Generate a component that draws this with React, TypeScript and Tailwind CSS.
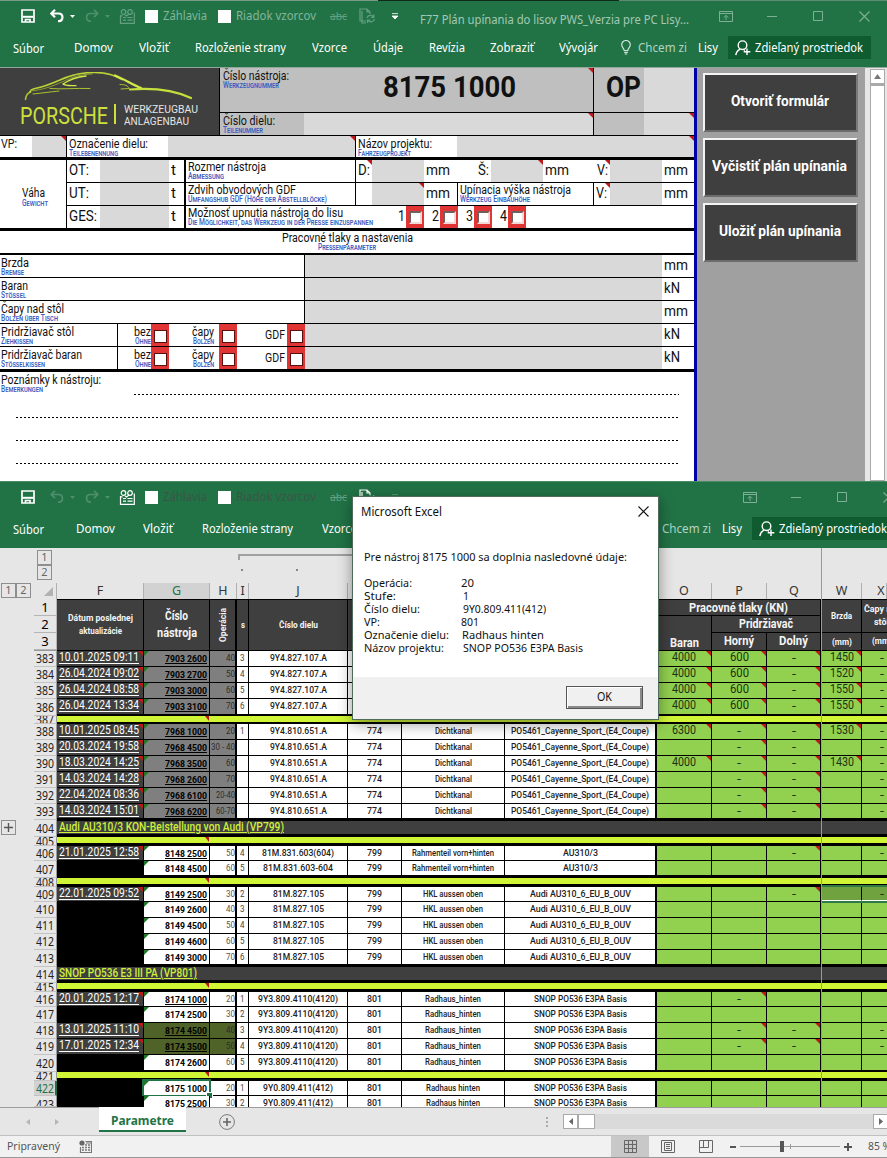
import React, { useLayoutEffect, useRef, useState } from "react";

/* Text condensed or widened horizontally so that it spans w pixels. */
function Fit({ w, className = "", vertical = false, children }: { w: number; className?: string; vertical?: boolean; children: React.ReactNode }) {
  const ref = useRef<HTMLSpanElement>(null);
  const [scale, setScale] = useState(1);
  useLayoutEffect(() => {
    const el = ref.current;
    if (!el) return;
    const prev = el.style.transform;
    el.style.transform = "none";
    const box = el.getBoundingClientRect();
    el.style.transform = prev;
    const natural = vertical ? box.height : box.width;
    if (natural) setScale(w / natural);
  }, [w, vertical, children]);
  return (
    <span className="flex shrink-0 items-start justify-start whitespace-nowrap" style={{ width: w }}>
      <span ref={ref} className={"block shrink-0 origin-left " + className} style={{ transform: `scaleX(${scale})` }}>
        {children}
      </span>
    </span>
  );
}

/* ---------- icons ---------- */
const SaveIcon = () => (
  <svg width="14" height="14" viewBox="0 0 14 14" fill="none" stroke="#fff" strokeWidth="1.7">
    <path d="M1 1h12v12H1z" />
    <path d="M1.500 7.800h11" strokeWidth="2" />
    <path d="M4.500 13v-2.500h4.500V13" />
  </svg>
);
const UndoIcon = ({ flip = false, dim = false }: { flip?: boolean; dim?: boolean }) => (
  <svg width="14" height="14" viewBox="0 0 14 14" fill="none" stroke={dim ? "#4f8f6c" : "#fff"} strokeWidth={dim ? 1.7 : 2.2} className={flip ? "-scale-x-100" : ""}>
    <path d="M1.500 4.500h7.200c5 0 5 7.500 0 7.700H8" />
    <path d="M5 .8L1.300 4.500 5 8.200" />
  </svg>
);
const Caret = ({ dim = false }: { dim?: boolean }) => (
  <svg width="5" height="3" viewBox="0 0 5 3"><path d="M0 0h5L2.500 3z" fill={dim ? "#4f8f6c" : "#fff"} /></svg>
);
const FormIcon = ({ color }: { color: string }) => (
  <svg width="17" height="15" viewBox="0 0 17 15" fill="none" stroke={color} strokeWidth="1.200">
    <circle cx="4.500" cy="3" r="2.300" /><circle cx="11" cy="3" r="2.300" />
    <path d="M1.500 6v8.300h13.800V3.500M1.500 6.800h2" />
    <path d="M4 8.500h3M8.500 8.500h5M4 11.200h3M8.500 11.200h5M6 6l1.500 1L10 5" />
  </svg>
);
const PageRefreshIcon = ({ color }: { color: string }) => (
  <svg width="17" height="16" viewBox="0 0 17 16" fill="none" stroke={color} strokeWidth="1.200">
    <path d="M7 13H1V1h7l3 3v2M8 1v3h3M3 3v12h4" />
    <path d="M8 10c.5-3 5-3.800 6.500-1M14.800 6.500V9.300H12M15.500 11c-.5 3.200-5 4-6.500 1M8.500 15v-3h2.800" />
  </svg>
);
const RibbonIcon = () => (
  <svg width="14" height="11" viewBox="0 0 14 11" fill="none" stroke="#7fb095" strokeWidth="1">
    <path d="M.5.5h13v10H.5zM.5 2.500h13M7 9V4.500M4.800 6.500L7 4.300l2.200 2.200" />
  </svg>
);
const MaxIcon = () => (
  <svg width="10" height="10" viewBox="0 0 10 10"><path d="M.5.5h9v9h-9z" fill="none" stroke="#7fb095" /></svg>
);
const CloseIcon = ({ color }: { color: string }) => (
  <svg width="11" height="11" viewBox="0 0 11 11"><path d="M.5.5l10 10M10.500.5l-10 10" fill="none" stroke={color} strokeWidth="1.100" /></svg>
);
const PersonIcon = () => (
  <svg width="16" height="16" viewBox="0 0 16 16" fill="none" stroke="#fff" strokeWidth="1.400">
    <circle cx="7.500" cy="5.200" r="4.300" />
    <path d="M.8 15.200c.4-3.200 2.200-5 4.500-6M8.500 9.500l1.500.8M12 8.500v6.500M8.700 11.800h6.600" />
  </svg>
);
const BulbIcon = () => (
  <svg width="10" height="15" viewBox="0 0 10 15" fill="none" stroke="#cfe3d8" strokeWidth="1.200">
    <path d="M3.200 10.500c0-2-2.500-3-2.500-5.700a4.300 4.300 0 0 1 8.600 0c0 2.700-2.500 3.700-2.500 5.700zM3.200 12.300h3.600M3.700 14h2.600" />
  </svg>
);

/* ---------- ribbon ---------- */
function QuickBar({ active }: { active: boolean }) {
  const label = active ? "text-[#83b59a]" : "text-[#3a5546]";
  return (
    <div className={"grid h-[30px] grid-rows-1 items-center " + (active ? "grid-cols-[21px_29px_20px_15px_20px_14px_26px_18px_55px_18px_94px_29px_33px_28px_299px_48px_46px_46px_28px]" : "grid-cols-[21px_29px_20px_15px_20px_14px_26px_18px_55px_18px_94px_29px_33px_28px_323px_48px_46px_46px_12px]")}>
      <i />
      <SaveIcon />
      <UndoIcon dim={!active} />
      <Caret dim={!active} />
      <UndoIcon flip dim />
      <Caret dim />
      <FormIcon color={active ? "#64a080" : "#fff"} />
      <b className="size-[13px] bg-white" />
      <Fit w={44} className={"text-[12px] leading-4 " + label}>Záhlavia</Fit>
      <b className="size-[13px] bg-white" />
      <Fit w={80} className={"text-[12px] leading-4 " + label}>Riadok vzorcov</Fit>
      <Fit w={17} className="text-[10px] leading-4 text-[#64a080] line-through">abc</Fit>
      <PageRefreshIcon color={active ? "#64a080" : "#fff"} />
      <svg width="6" height="7" viewBox="0 0 6 7"><path d="M0 .6h6M0 3l3 3 3-3z" fill={active ? "#fff" : "#64a080"} stroke={active ? "#fff" : "#64a080"} strokeWidth=".8" /></svg>
      <div className="pt-[7px]">{active && <Fit w={269} className="text-[12px] leading-4 text-[#a3c8b3]">F77 Plán upínania do lisov PWS_Verzia pre PC Lisy...</Fit>}</div>
      <RibbonIcon />
      <b className="h-px w-[10px] bg-[#7fb095]" />
      <MaxIcon />
      <CloseIcon color="#7fb095" />
    </div>
  );
}

function ShareButton() {
  return (
    <div className="flex h-[23px] w-[143px] items-center gap-1 bg-[#0e5c2f] pl-[7px]">
      <PersonIcon />
      <Fit w={108} className="text-[12.500px] leading-5">Zdieľaný prostriedok</Fit>
    </div>
  );
}

function Ribbon({ active }: { active: boolean }) {
  const t = "text-[12.500px] leading-5";
  return (
    <header className="h-[67px] shrink-0 overflow-hidden bg-[#217346] text-white">
      {active ? (
        <div className="flex h-px">
          <b className="w-[378px] bg-[#7a9a86]" /><b className="w-[241px] bg-[#0d2a1b]" /><b className="flex-1 bg-[#5d8a70]" />
        </div>
      ) : (
        <div className="h-px bg-[#4b8c68]" />
      )}
      <QuickBar active={active} />
      {active ? (
        <div className="grid h-[33px] grid-cols-[13px_61px_65px_56px_117px_61px_56px_61px_69px_62px_17px_60px_30px_159px] grid-rows-1 items-center">
          <i />
          <Fit w={31} className={t + " mt-[2px]"}>Súbor</Fit>
          <Fit w={39} className={t}>Domov</Fit>
          <Fit w={30} className={t}>Vložiť</Fit>
          <Fit w={91} className={t}>Rozloženie strany</Fit>
          <Fit w={35} className={t}>Vzorce</Fit>
          <Fit w={30} className={t}>Údaje</Fit>
          <Fit w={36} className={t}>Revízia</Fit>
          <Fit w={44} className={t}>Zobraziť</Fit>
          <Fit w={39} className={t}>Vývojár</Fit>
          <BulbIcon />
          <Fit w={49} className={t + " text-[#b5d3c2]"}>Chcem zi</Fit>
          <Fit w={20} className={t}>Lisy</Fit>
          <ShareButton />
        </div>
      ) : (
        <div className="grid h-[33px] grid-cols-[13px_63px_67px_59px_120px_340px_60px_30px_135px] grid-rows-1 items-center">
          <i />
          <Fit w={31} className={t + " mt-[2px]"}>Súbor</Fit>
          <Fit w={39} className={t}>Domov</Fit>
          <Fit w={30} className={t}>Vložiť</Fit>
          <Fit w={91} className={t}>Rozloženie strany</Fit>
          <Fit w={35} className={t}>Vzorce</Fit>
          <Fit w={49} className={t + " text-[#b5d3c2]"}>Chcem zi</Fit>
          <Fit w={20} className={t}>Lisy</Fit>
          <ShareButton />
        </div>
      )}
    </header>
  );
}

/* ---------- form sheet ---------- */
const RedMark = () => (
  <svg className="absolute right-0 top-0" width="5" height="5" viewBox="0 0 5 5"><path d="M0 0h5v5z" fill="#c01818" /></svg>
);

const blue = "text-[8.500px] font-medium leading-[7px] text-[#3a5cc0] [font-variant:small-caps]";

function Label({ sk, w, de, dw, className = "", end = false }: { sk: string; w: number; de?: string; dw?: number; className?: string; end?: boolean }) {
  return (
    <div className={"flex flex-col pl-[1px] " + (end ? "items-end " : "") + className}>
      <Fit w={w} className="text-[12.500px] leading-[14px]">{sk}</Fit>
      {de && <Fit w={dw || 10} className={"-mt-px " + blue}>{de}</Fit>}
    </div>
  );
}

function Unit({ children, w }: { children: string; w: number }) {
  return <div className="pl-[2px]"><Fit w={w} className="text-[15.500px] leading-[21px]">{children}</Fit></div>;
}

const Gray = ({ className = "", mark = false }: { className?: string; mark?: boolean }) => (
  <div className={"relative h-full bg-[#d9d9d9] " + className}>{mark && <RedMark />}</div>
);

const TickBox = () => (
  <div className="flex h-full w-[18px] items-center justify-center bg-[#e13434] pt-[3px]">
    <div className="size-[13px] border border-[#5a0f0f] bg-white" />
  </div>
);
const SunkenBox = () => (
  <div className="flex h-full w-[18px] items-center justify-center bg-[#e13434]">
    <div className="size-[13px] border-2 border-b-[#f3d8d8] border-l-[#6f5f5f] border-r-[#f3d8d8] border-t-[#6f5f5f] bg-white" />
  </div>
);

function Logo() {
  return (
    <div className="h-[67px] w-[219px] shrink-0 bg-[#3f3f3f] pl-5 pt-1">
      <svg width="180" height="32" viewBox="20 72 180 32" fill="none" strokeLinecap="round" className="-mb-px block">
        <path d="M25.500 99.500c.3-4 1.500-6 5-7.500" stroke="#a9c22e" strokeWidth="1.600" />
        <path d="M30 92c.5-2 1.500-2.700 5-3.500 10-2 17-5 25-8.500 13-6 22-7.500 34-7.500 14 0 20 3 28 7" stroke="#bcd536" strokeWidth="1.700" />
        <path d="M31 91c12-1.500 20-4 32-9.500 9-4.500 17-7 29-7.500" stroke="#8aa02c" strokeWidth="1" />
        <path d="M115 75.500c10 4 17 9 26 12.500" stroke="#d2e84a" strokeWidth="2.400" />
        <path d="M130 89.500c25-2 45 1 61 8.500" stroke="#c6df3c" strokeWidth="2.200" />
        <path d="M86 76c-9 1-18 4.500-23 8 2 2 7 1.500 13 1.700" stroke="#d2e84a" strokeWidth="1.300" />
        <path d="M50 88.500c12 1 25-.5 40 0M120 84.500c5 0 8 1 9 4l-8 .5M33 94l26-3" stroke="#a9c22e" strokeWidth="1" />
      </svg>
      <div className="flex items-start">
        <Fit w={88} className="text-[23.500px] leading-[26px] text-[#cde03c]">PORSCHE</Fit>
        <b className="ml-[6px] mr-[8px] mt-px h-5 w-[1.500px] bg-[#cde03c]" />
        <div>
          <Fit w={74} className="text-[11.500px] leading-[12px] text-[#e4e4e4]">WERKZEUGBAU</Fit>
          <Fit w={65} className="text-[11.500px] leading-[12px] text-[#e4e4e4]">ANLAGENBAU</Fit>
        </div>
      </div>
    </div>
  );
}

const weights: [string, number][] = [["OT:", 20], ["UT:", 20], ["GES:", 28]];
const params: { sk: string; w: number; de: string; dw: number; unit: string; uw: number; boxes?: boolean }[] = [
  { sk: "Brzda", w: 28, de: "Bremse", dw: 23, unit: "mm", uw: 24 },
  { sk: "Baran", w: 27, de: "Stössel", dw: 25, unit: "kN", uw: 16 },
  { sk: "Čapy nad stôl", w: 63, de: "Bolzen über Tisch", dw: 57, unit: "mm", uw: 24 },
  { sk: "Pridržiavač stôl", w: 73, de: "Ziehkissen", dw: 32, unit: "kN", uw: 16, boxes: true },
  { sk: "Pridržiavač baran", w: 81, de: "Stösselkissen", dw: 44, unit: "kN", uw: 16, boxes: true },
];

function FormSheet() {
  return (
    <div className="flex h-[413px] w-[694px] flex-col bg-white font-[Roboto,sans-serif] text-[#111]">
      <div className="flex h-[68px] shrink-0 border-b border-black">
        <Logo />
        <div className="w-[475px] border-l border-black">
          <div className="grid h-[45px] grid-cols-[374px_50px_50px] grid-rows-1 border-b border-black">
            <div className="relative flex border-r border-black bg-[#bfbfbf]">
              <Label sk="Číslo nástroja:" w={66} de="Werkzeugnummer" dw={56} className="w-[69px] pl-[3px] pt-px" />
              <div className="ml-[94px] pt-[1px]"><Fit w={133} className="text-[29px] font-bold leading-9">8175 1000</Fit></div>
              <RedMark />
            </div>
            <div className="bg-[#bfbfbf] pl-3 pt-[1px]"><Fit w={35} className="text-[29px] font-bold leading-9">OP</Fit></div>
            <Gray />
          </div>
          <div className="grid h-[22px] grid-cols-[84px_290px_50px_50px] grid-rows-1">
            <div className="bg-[#bfbfbf]"><Label sk="Číslo dielu:" w={52} de="Teilenummer" dw={40} className="pl-[3px] pt-px" /></div>
            <Gray className="border-r border-black" mark />
            <div className="bg-[#bfbfbf]" />
            <Gray mark />
          </div>
        </div>
      </div>
      <div className="grid h-[24px] shrink-0 grid-cols-[32px_35px_101px_188px_101px_237px] grid-rows-1 border-b-[3px] border-black">
        <Label sk="VP:" w={16} className="pt-px" />
        <Gray className="border-r border-black" mark />
        <Label sk="Označenie dielu:" w={79} de="Teilebenennung" dw={49} className="pl-[2px] pt-px" />
        <Gray className="border-r border-black" mark />
        <Label sk="Názov projektu:" w={74} de="Fahrzeugprojekt" dw={53} className="pl-[2px] pt-px" />
        <Gray mark />
      </div>
      <div className="flex h-[71px] shrink-0 border-b-[3px] border-black">
        <div className="flex w-[67px] flex-col items-center border-r border-black pt-[25px]">
          <Fit w={23} className="text-[12.500px] leading-4">Váha</Fit>
          <div className="pl-1"><Fit w={26} className={"-mt-px " + blue}>Gewicht</Fit></div>
        </div>
        <div className="w-[119px] border-r-2 border-black">
          {weights.map(([t, w], i) => (
            <div key={t} className={"grid grid-cols-[33px_69px_15px] grid-rows-1 " + (i < 2 ? "h-[23px] border-b border-black" : "h-[22px]")}>
              <Unit w={w}>{t}</Unit>
              <Gray />
              <Unit w={5}>t</Unit>
            </div>
          ))}
        </div>
        <div className="w-[508px]">
          <div className="grid h-[23px] grid-cols-[170px_16px_52px_52px_15px_52px_52px_15px_52px_32px] grid-rows-1 border-b border-black">
            <Label sk="Rozmer nástroja" w={78} de="Abmessung" dw={36} className="border-r border-black pl-[2px]" />
            <div className="relative"><Unit w={12}>D:</Unit><RedMark /></div>
            <Gray />
            <Unit w={24}>mm</Unit>
            <Unit w={11}>Š:</Unit>
            <Gray mark />
            <Unit w={24}>mm</Unit>
            <div className="relative"><Unit w={11}>V:</Unit><RedMark /></div>
            <Gray />
            <Unit w={24}>mm</Unit>
          </div>
          <div className="grid h-[23px] grid-cols-[170px_16px_52px_34px_136px_16px_52px_32px] grid-rows-1 border-b border-black">
            <Label sk="Zdvih obvodových GDF" w={108} de="Umfangshub GDF (Höhe der Abstellblöcke)" dw={139} className="border-r border-black pl-[2px]" />
            <i />
            <Gray mark />
            <div className="border-r border-black"><Unit w={24}>mm</Unit></div>
            <Label sk="Upínacia výška nástroja" w={111} de="Werkzeug Einbauhöhe" dw={70} className="border-r border-black pl-[2px]" />
            <div className="relative"><Unit w={11}>V:</Unit><RedMark /></div>
            <Gray />
            <Unit w={24}>mm</Unit>
          </div>
          <div className="grid h-[22px] grid-cols-[212px_26px_8px_26px_8px_26px_8px_26px] grid-rows-1">
            <Label sk="Možnosť upnutia nástroja do lisu" w={155} de="Die Möglichkeit, das Werkzeug in der Presse einzuspannen" dw={185} className="pl-[2px]" />
            {["1", "2", "3", "4"].map((n, i) => (
              <React.Fragment key={n}>
                {i > 0 && <i />}
                <div className="flex h-full"><div className="w-2"><Fit w={7} className="text-[14px] leading-[21px]">{n}</Fit></div><SunkenBox /></div>
              </React.Fragment>
            ))}
          </div>
        </div>
      </div>
      <div className="flex h-[24px] shrink-0 flex-col items-center border-b-2 border-black">
        <Fit w={131} className="text-[12.500px] leading-[14px]">Pracovné tlaky a nastavenia</Fit>
        <Fit w={58} className={"-mt-px " + blue}>Pressenparameter</Fit>
      </div>
      {params.map((p, i) => (
        <div key={p.sk} className={"grid shrink-0 grid-cols-[305px_357px_32px] grid-rows-1 border-black " + (i === 4 ? "h-[25px] border-b-[3px]" : "h-[23px] border-b")}>
          {p.boxes ? (
            <div className="grid h-full grid-cols-[118px_33px_18px_50px_18px_50px_17px] grid-rows-1 border-r border-black">
              <Label sk={p.sk} w={p.w} de={p.de} dw={p.dw} className="border-r border-black pt-px" />
              <Label sk="bez" w={17} de="Ohne" dw={16} end className="pt-px" />
              <TickBox />
              <Label sk="čapy" w={22} de="Bolzen" dw={21} end className="pr-[5px] pt-px" />
              <TickBox />
              <div className="flex items-center justify-end pr-[2px]"><Fit w={20} className="text-[12.500px] leading-[20px]">GDF</Fit></div>
              <TickBox />
            </div>
          ) : (
            <Label sk={p.sk} w={p.w} de={p.de} dw={p.dw} className="border-r border-black pt-px" />
          )}
          <Gray />
          <Unit w={p.uw}>{p.unit}</Unit>
        </div>
      ))}
      <div className="h-[22px] shrink-0"><Label sk="Poznámky k nástroju:" w={100} de="Bemerkungen" dw={42} className="pt-px" /></div>
      <div className="ml-[134px] mr-[15px] h-px bg-[repeating-linear-gradient(90deg,#000_0_2px,#fff_2px_4px)]" />
      {[0, 1, 2].map((i) => (
        <div key={i} className="ml-4 mr-[15px] mt-[22px] h-px bg-[repeating-linear-gradient(90deg,#000_0_2px,#fff_2px_4px)]" />
      ))}
    </div>
  );
}

function SidePanel() {
  const items: [string, number][] = [["Otvoriť formulár", 98], ["Vyčistiť plán upínania", 135], ["Uložiť plán upínania", 122]];
  return (
    <div className="flex flex-1">
      <div className="w-[171px] border-l-[3px] border-[#0000a8] bg-[#a0a0a0] pl-[6px] pt-[5px] font-[Roboto,sans-serif]">
        {items.map(([t, w]) => (
          <div key={t} className="mb-[6px] flex h-[59px] w-[155px] items-center justify-center border-2 border-b-[#6c6c6c] border-l-[#f4f4f4] border-r-[#7a7a7a] border-t-[#f4f4f4] bg-[#3f3f3f] pb-1 pr-[2px]">
            <Fit w={w} className="text-[15px] font-bold leading-5 text-white">{t}</Fit>
          </div>
        ))}
      </div>
      <div className="flex flex-1 flex-col bg-[#e6e6e6] pl-[5px] pt-px">
        <div className="flex h-[15px] w-[15px] items-center justify-center border border-[#aaa] bg-white">
          <svg width="7" height="5" viewBox="0 0 7 5"><path d="M0 5h7L3.500 0z" fill="#777" /></svg>
        </div>
        <div className="w-[15px] flex-1 border border-t-2 border-[#aaa] bg-white" />
      </div>
    </div>
  );
}

/* ---------- parameter table ---------- */
type Row = {
  n: number; h: number; kind?: "gap" | "title"; title?: string; tw?: number; thick?: 2 | 3;
  date?: string; g?: string; gu?: boolean; fill?: "gray" | "olive"; op?: string; s?: string; j?: string; k?: string; l?: string; m?: string;
  o?: string; p?: string; q?: string; w?: string; x?: string; marks?: string; sel?: boolean;
};
const A = { j: "9Y4.827.107.A", fill: "gray", gu: true, p: "600", q: "-", x: "-", marks: "OPQW" } as const;
const B = { j: "9Y4.810.651.A", k: "774", l: "Dichtkanal", m: "PO5461_Cayenne_Sport_(E4_Coupe)", fill: "gray", gu: true, p: "-", q: "-", x: "-", marks: "PQ" } as const;
const C = { k: "799", l: "Rahmenteil vorn+hinten", m: "AU310/3" } as const;
const D = { j: "81M.827.105", k: "799", l: "HKL aussen oben", m: "Audi AU310_6_EU_B_OUV" } as const;
const E = { j: "9Y3.809.4110(4120)", k: "801", l: "Radhaus_hinten", m: "SNOP PO536 E3PA Basis" } as const;
const G = { j: "9Y0.809.411(412)", k: "801", l: "Radhaus hinten", m: "SNOP PO536 E3PA Basis" } as const;

const rows: Row[] = [
  { ...A, n: 383, h: 16, date: "10.01.2025 09:11", g: "7903 2600", op: "40", s: "3", o: "4000", w: "1450" },
  { ...A, n: 384, h: 16, date: "26.04.2024 09:02", g: "7903 2700", op: "50", s: "4", o: "4000", w: "1520" },
  { ...A, n: 385, h: 16, date: "26.04.2024 08:58", g: "7903 3000", op: "60", s: "5", o: "4000", w: "1550" },
  { ...A, n: 386, h: 17, thick: 2, date: "26.04.2024 13:34", g: "7903 3100", op: "70", s: "6", o: "4000", w: "1550" },
  { n: 387, h: 8, kind: "gap", thick: 2 },
  { ...B, n: 388, h: 16, date: "10.01.2025 08:45", g: "7968 1000", op: "20", s: "1", o: "6300", w: "1530", marks: "OPQW" },
  { ...B, n: 389, h: 16, date: "20.03.2024 19:58", g: "7968 4500", op: "30 - 40" },
  { ...B, n: 390, h: 16, date: "18.03.2024 14:25", g: "7968 3500", op: "60", o: "4000", w: "1430", marks: "OPQW" },
  { ...B, n: 391, h: 16, date: "14.03.2024 14:28", g: "7968 2600", op: "70" },
  { ...B, n: 392, h: 16, date: "22.04.2024 08:36", g: "7968 6100", op: "20-40" },
  { ...B, n: 393, h: 16, thick: 2, date: "14.03.2024 15:01", g: "7968 6200", op: "60-70" },
  { n: 404, h: 17, kind: "title", title: "Audi AU310/3 KON-Beistellung von Audi (VP799)", tw: 225 },
  { n: 405, h: 9, kind: "gap", thick: 3 },
  { ...C, n: 406, h: 15, date: "21.01.2025 12:58", g: "8148 2500", gu: true, op: "50", s: "4", j: "81M.831.603(604)", q: "-", x: "-", marks: "Q" },
  { ...C, n: 407, h: 17, thick: 3, g: "8148 4500", op: "60", s: "5", j: "81M.831.603-604" },
  { n: 408, h: 9, kind: "gap", thick: 3 },
  { ...D, n: 409, h: 15, date: "22.01.2025 09:52", g: "8149 2500", gu: true, op: "30", s: "2", q: "-", x: "-", marks: "Q", sel: true },
  { ...D, n: 410, h: 16, g: "8149 2600", op: "40", s: "3" },
  { ...D, n: 411, h: 16, g: "8149 4500", op: "50", s: "4" },
  { ...D, n: 412, h: 16, g: "8149 4600", op: "60", s: "5" },
  { ...D, n: 413, h: 17, thick: 3, g: "8149 3000", op: "70", s: "6" },
  { n: 414, h: 16, kind: "title", title: "SNOP PO536 E3 III PA (VP801)", tw: 138 },
  { n: 415, h: 9, kind: "gap", thick: 3 },
  { ...E, n: 416, h: 15, date: "20.01.2025 12:17", g: "8174 1000", gu: true, op: "20", s: "1", p: "-", marks: "P" },
  { ...E, n: 417, h: 16, g: "8174 2500", op: "30", s: "2" },
  { ...E, n: 418, h: 16, date: "13.01.2025 11:10", g: "8174 4500", gu: true, fill: "olive", op: "40", s: "3", p: "-", q: "-", x: "-", marks: "PQ" },
  { ...E, n: 419, h: 16, date: "17.01.2025 12:34", g: "8174 3500", gu: true, fill: "olive", op: "50", s: "4", p: "-", q: "-", x: "-", marks: "PQ" },
  { ...E, n: 420, h: 17, thick: 2, g: "8174 2600", op: "60", s: "5" },
  { n: 421, h: 9, kind: "gap", thick: 3 },
  { ...G, n: 422, h: 15, g: "8175 1000", op: "20", s: "1" },
  { ...G, n: 423, h: 11, g: "8175 2500", op: "30", s: "2" },
];

const widths: Record<string, number> = {
  "9Y4.827.107.A": 57, "9Y4.810.651.A": 57, "81M.831.603(604)": 72, "81M.831.603-604": 70, "81M.827.105": 51,
  "9Y3.809.4110(4120)": 80, "9Y0.809.411(412)": 70, "774": 15, "799": 15, "801": 15, Dichtkanal: 37,
  "Rahmenteil vorn+hinten": 82, "HKL aussen oben": 60, Radhaus_hinten: 56, "Radhaus hinten": 54,
  "PO5461_Cayenne_Sport_(E4_Coupe)": 138, "AU310/3": 35, "Audi AU310_6_EU_B_OUV": 101, "SNOP PO536 E3PA Basis": 93,
  "30 - 40": 24, "20-40": 19, "60-70": 19,
};
const heights: Record<number, string> = { 8: "h-[8px]", 9: "h-[9px]", 11: "h-[11px]", 15: "h-[15px]", 16: "h-[16px]", 17: "h-[17px]" };

function Txt({ t, className = "border-r" }: { t?: string; className?: string }) {
  return (
    <div className={"flex justify-center border-black bg-white " + className}>
      {t && <Fit w={widths[t]} className="text-[9px] font-medium leading-[15px] text-[#222]">{t}</Fit>}
    </div>
  );
}

function Green({ t, mark, className = "", sel = false }: { t?: string; mark?: boolean; className?: string; sel?: boolean }) {
  const dash = t === "-";
  const w = !t ? 0 : dash ? 4 : t.length === 3 ? 19 : 24;
  return (
    <div className={"relative flex justify-center overflow-hidden border-r border-black " + (sel ? "border-b border-b-white bg-[#70a33f] " : "bg-[#92d050] ") + className}>
      {t && <Fit w={w} className={"text-[12px] text-[#1d3210] " + (dash ? "leading-[14px]" : "leading-[13px]")}>{t}</Fit>}
      {mark && <RedMark />}
    </div>
  );
}

const gridCols = "grid grid-rows-1 grid-cols-[87px_66px_27px_12px_99px_54px_103px_152px_55px_55px_55px_40px_25px]";

function DataRow({ r }: { r: Row }) {
  const border = r.thick === 3 ? "border-b-[3px]" : r.thick === 2 ? "border-b-2" : "border-b";
  if (r.kind === "gap")
    return (
      <div className={"relative border-black bg-[#d0f535] " + heights[r.h] + " " + border}>
        <svg className="absolute left-[148px] top-0" width="4" height="5" viewBox="0 0 4 5"><path d="M0 0h4v5z" fill="#c01818" /></svg>
      </div>
    );
  if (r.kind === "title")
    return (
      <div className={"border-b-[3px] border-black bg-[#3f3f3f] pl-[2px] " + heights[r.h] + (r.h === 17 ? " border-t" : "")}>
        <Fit w={r.tw || 100} className="-mt-px text-[12px] font-medium leading-[14px] text-[#d0f03a] underline underline-offset-1">{r.title}</Fit>
      </div>
    );
  const bg = r.fill === "gray" ? "bg-[#7f7f7f]" : r.fill === "olive" ? "bg-[#4f6228]" : "bg-white";
  const m = r.marks || "";
  const active = r.n === 422;
  return (
    <div className={gridCols + " border-black " + heights[r.h] + " " + (r.h === 11 ? "overflow-hidden" : border)}>
      <div className={"relative border-r border-black pl-[2px] " + (r.date ? "bg-[#3f3f3f]" : "bg-black")}>
        {r.date && <Fit w={80} className="border-b border-white text-[12.500px] leading-[12px] text-white">{r.date}</Fit>}
        {r.date && <RedMark />}
      </div>
      <div className={"relative flex justify-end border-r border-black pr-[2px] " + bg}>
        <Fit w={42} className={"text-[9.500px] font-bold leading-[15px] text-black " + (r.gu ? "underline underline-offset-1" : "")}>{r.g}</Fit>
        <svg className="absolute left-0 top-0" width="5" height="5" viewBox="0 0 5 5"><path d="M0 0h5L0 5z" fill="#1d7a28" /></svg>
        {active && (
          <div className="absolute -left-[2px] -top-[2px] h-[18px] w-[69px] border-2 border-[#217346]">
            <b className="absolute -bottom-[3px] -right-[3px] size-[5px] bg-[#217346] outline outline-white" />
          </div>
        )}
      </div>
      <div className={"flex justify-end border-r-2 border-black " + bg}>
        <Fit w={widths[r.op || ""] || 9} className={"text-[9px] leading-[14px] " + (r.fill ? "text-[#2d2d2d]" : "text-[#555]")}>{r.op}</Fit>
      </div>
      <div className="flex justify-center border-r border-black bg-white">
        {r.s && <Fit w={4.5} className="text-[9px] leading-[14px] text-[#444]">{r.s}</Fit>}
      </div>
      <Txt t={r.j} />
      <Txt t={r.k} />
      <Txt t={r.l} />
      <Txt t={r.m} className="border-r-2" />
      <Green t={r.o} mark={m.includes("O")} />
      <Green t={r.p} mark={m.includes("P")} />
      <Green t={r.q} mark={m.includes("Q")} className="border-r-2" />
      <Green t={r.w} mark={m.includes("W")} sel={r.sel} />
      <Green t={r.x} sel={r.sel} className="border-r-0 pl-[14px]" />
    </div>
  );
}

function TableHead() {
  const h = "text-[#f4f4f4] font-bold";
  const c = "flex flex-col items-center justify-center border-r border-black bg-[#3f3f3f] ";
  return (
    <div className="grid h-[52px] grid-cols-[87px_66px_27px_12px_99px_54px_103px_152px_165px_40px_25px] grid-rows-1 border-b border-t border-black">
      <div className={c}>
        <Fit w={65} className={h + " text-[9px] leading-[13px]"}>Dátum poslednej</Fit>
        <Fit w={43} className={h + " text-[9px] leading-[13px]"}>aktualizácie</Fit>
      </div>
      <div className={c}>
        <Fit w={23} className={h + " text-[12px] leading-[17px]"}>Číslo</Fit>
        <Fit w={40} className={h + " text-[12px] leading-[17px]"}>nástroja</Fit>
      </div>
      <div className={c + "border-r-2"}>
        <div className="-rotate-90"><Fit vertical w={34} className={h + " text-[9px] leading-[12px]"}>Operácia</Fit></div>
      </div>
      <div className={c}><Fit w={4} className={h + " text-[9px] leading-[12px]"}>s</Fit></div>
      <div className={c}><Fit w={39} className={h + " text-[9px] leading-[12px]"}>Číslo dielu</Fit></div>
      <div className={c} />
      <div className={c} />
      <div className={c + "border-r-2"} />
      <div className="grid grid-rows-[16px_34px] border-r-2 border-black bg-[#3f3f3f]">
        <div className="flex justify-center border-b border-black"><Fit w={99} className={h + " text-[12px] leading-[16px]"}>Pracovné tlaky (KN)</Fit></div>
        <div className="grid grid-cols-[55px_108px] grid-rows-1">
          <div className="flex items-end justify-center border-r border-black"><Fit w={29} className={h + " text-[12px] leading-[14px]"}>Baran</Fit></div>
          <div className="grid grid-rows-[17px_17px]">
            <div className="flex justify-center border-b border-black"><Fit w={54} className={h + " text-[12px] leading-[17px]"}>Pridržiavač</Fit></div>
            <div className="grid grid-cols-[55px_53px]">
              <div className="flex justify-center border-r border-black"><Fit w={30} className={h + " text-[12px] leading-[17px]"}>Horný</Fit></div>
              <div className="flex justify-center"><Fit w={29} className={h + " text-[12px] leading-[16px]"}>Dolný</Fit></div>
            </div>
          </div>
        </div>
      </div>
      <div className="grid grid-rows-[33px_17px] border-r border-black bg-[#3f3f3f]">
        <div className="flex items-center justify-center border-b border-black"><Fit w={21} className={h + " text-[9px] leading-[12px]"}>Brzda</Fit></div>
        <div className="flex items-center justify-center"><Fit w={20} className={h + " text-[9px] leading-[12px]"}>(mm)</Fit></div>
      </div>
      <div className="grid grid-rows-[33px_17px] overflow-hidden bg-[#3f3f3f]">
        <div className="border-b border-black pl-[2px] pt-[3px]">
          <Fit w={37} className={h + " text-[9px] leading-[13px]"}>Čapy nad</Fit>
          <div className="pl-[10px]"><Fit w={15} className={h + " text-[9px] leading-[13px]"}>stôl</Fit></div>
        </div>
        <div className="pl-[10px] pt-[2px]"><Fit w={20} className={h + " text-[9px] leading-[12px]"}>(mm)</Fit></div>
      </div>
    </div>
  );
}

const LevelBtn = ({ t }: { t: string }) => (
  <div className="flex size-[15px] items-center justify-center border border-[#8e8e8e] text-[11px] text-[#666]">{t}</div>
);

const letters: [string, string][] = [["F", ""], ["G", "bg-[#d2d2d2] text-[#217346]"], ["H", ""], ["I", ""], ["J", ""], ["", ""], ["", ""], ["", ""], ["O", ""], ["P", ""], ["Q", ""], ["W", ""], ["X", "pl-[14px] text-[#333]"]];

function ParameterTable() {
  return (
    <div className="relative flex h-[559px] shrink-0 bg-[#e6e6e6]">
      <div className="w-[34px] shrink-0 pl-px pt-[35px]">
        <div className="flex"><LevelBtn t="1" /><LevelBtn t="2" /></div>
        <div className="mt-[222px] flex size-[15px] items-center justify-center border border-[#8e8e8e]">
          <svg width="9" height="9" viewBox="0 0 9 9"><path d="M0 4.500h9M4.500 0v9" stroke="#555" strokeWidth="1.400" /></svg>
        </div>
      </div>
      <div className="w-[23px] shrink-0">
        <div className="flex h-[35px] flex-col pl-[3px] pt-[2px]"><LevelBtn t="1" /><LevelBtn t="2" /></div>
        <div className="flex h-4 items-end justify-end border-r border-[#b0b0b0] pb-[3px] pr-[3px]">
          <svg width="9" height="9" viewBox="0 0 9 9"><path d="M9 0v9H0z" fill="#b2b2b2" /></svg>
        </div>
        {["1", "2", "3"].map((n) => (
          <div key={n} className="flex h-[17px] items-center justify-center border-b border-r border-[#b5b5b5] pt-[1px] text-[13px]">{n}</div>
        ))}
        <div className="h-px bg-[#999]" />
        {rows.map((r) => (
          <div key={r.n} className={"flex items-center justify-center overflow-hidden border-b border-r border-b-[#c3c3c3] " + heights[r.h] + (r.n === 422 ? " border-r-2 border-r-[#217346] bg-[#d2d2d2] text-[#217346]" : " border-r-[#999] text-[#222]")}>
            <div className={r.h === 11 ? "pt-[6px]" : ""}><Fit w={18} className="text-[13px] leading-[15px]">{r.n}</Fit></div>
          </div>
        ))}
      </div>
      <div className="w-[830px] shrink-0 overflow-hidden">
        <div className="h-[35px] pl-[181px] pt-[6px]">
          <div className="h-[6px] w-[420px] border-l-2 border-t-2 border-[#a0a0a0]" />
          <div className="mt-[9px] flex gap-[53px] pl-[3px]"><b className="size-[2px] bg-[#888]" /><b className="size-[2px] bg-[#888]" /></div>
        </div>
        <div className={gridCols + " h-4"}>
          {letters.map(([l, cls], i) => (
            <div key={i} className={"flex items-center justify-center border-r border-[#b0b0b0] text-[12.500px] " + (cls || "text-[#333]")}>{l}</div>
          ))}
        </div>
        <div className="font-[Roboto,sans-serif]">
          <TableHead />
          {rows.map((r) => <DataRow key={r.n} r={r} />)}
        </div>
      </div>
      <div className="absolute left-[821px] top-0 h-full w-px bg-[#9a9a9a]" />
      <div className="absolute left-[822px] top-[337px] h-[2px] w-[65px] bg-[#2f7a45]" />
      <div className="absolute left-[822px] top-[353px] h-[2px] w-[65px] bg-[#2f7a45]" />
    </div>
  );
}

function Dialog() {
  const lines: [string, number, string, number, string][] = [
    ["Operácia:", 48, "20", 13, "pl-0"],
    ["Stufe:", 32, "1", 6, "pl-[2px]"],
    ["Číslo dielu:", 56, "9Y0.809.411(412)", 83, "pl-[2px]"],
    ["VP:", 16, "801", 18, "pl-0"],
    ["Označenie dielu:", 85, "Radhaus hinten", 82, "pl-[1px]"],
    ["Názov projektu:", 80, "SNOP PO536 E3PA Basis", 120, "pl-[2px]"],
  ];
  const t = "text-[11.500px] leading-[13px]";
  return (
    <div className="absolute left-[352px] top-[496px] flex h-[224px] w-[307px] flex-col border border-[#4f6b5a] bg-white text-[#111] shadow-[0_4px_14px_rgba(0,0,0,0.4)]">
      <div className="flex h-[53px] justify-between pl-2 pr-[9px] pt-[6px]">
        <div className="pt-px"><Fit w={81} className="text-[12px] leading-4">Microsoft Excel</Fit></div>
        <div className="pt-[3px]"><CloseIcon color="#111" /></div>
      </div>
      <div className="flex-1 pl-[11px]">
        <div className="h-[26px]"><Fit w={263} className={t}>Pre nástroj 8175 1000 sa doplnia nasledovné údaje:</Fit></div>
        {lines.map(([a, aw, b, bw, pad]) => (
          <div key={a} className="grid h-[13px] grid-cols-[97px_1fr]">
            <Fit w={aw} className={t}>{a}</Fit>
            <div className={pad}><Fit w={bw} className={t}>{b}</Fit></div>
          </div>
        ))}
      </div>
      <div className="flex h-[42px] justify-end bg-[#f0f0f0] pr-[15px] pt-[9px]">
        <div className="flex h-[23px] w-[77px] items-center justify-center border border-[#555] bg-[#f0f0f0] pb-px shadow-[inset_1px_1px_0_#fff,inset_-2px_-2px_0_#8a8a8a]">
          <Fit w={15} className="text-[12px] leading-4">OK</Fit>
        </div>
      </div>
    </div>
  );
}

function BottomBars() {
  return (
    <>
      <div className="flex h-[28px] shrink-0 border-t border-[#9d9d9d] bg-[#e6e6e6] [&>*]:shrink-0">
        <div className="flex w-[99px] items-center gap-[25px] pl-[26px]">
          <svg width="4" height="6" viewBox="0 0 4 6"><path d="M4 0v6L0 3z" fill="#b5b5b5" /></svg>
          <svg width="4" height="6" viewBox="0 0 4 6"><path d="M0 0v6l4-3z" fill="#b5b5b5" /></svg>
        </div>
        <div className="-mt-px flex h-[25px] w-[87px] justify-center border-b-2 border-[#217346] bg-white pt-[4px]">
          <Fit w={63} className="text-[13px] font-bold leading-[18px] text-[#217346]">Parametre</Fit>
        </div>
        <div className="flex w-[360px] items-center pl-[33px]">
          <svg width="16" height="16" viewBox="0 0 16 16" fill="none" stroke="#7a7a7a"><circle cx="8" cy="8" r="7.400" /><path d="M4 8h8M8 4v8" strokeWidth="1.600" stroke="#666" /></svg>
        </div>
        <div className="flex w-[17px] flex-col justify-center gap-[2px]"><b className="size-[2px] bg-[#aaa]" /><b className="size-[2px] bg-[#aaa]" /><b className="size-[2px] bg-[#aaa]" /></div>
        <div className="mt-[6px] flex h-[15px] w-[325px] bg-[#dadada]">
          <div className="flex w-[15px] items-center justify-center border border-[#aaa] bg-white"><svg width="4" height="7" viewBox="0 0 4 7"><path d="M4 0v7L0 3.500z" fill="#666" /></svg></div>
          <div className="w-[17px] border border-[#aaa] bg-white" />
          <div className="flex-1" />
          <div className="flex w-[15px] items-center justify-center border border-[#aaa] bg-white"><svg width="4" height="7" viewBox="0 0 4 7"><path d="M0 0v7l4-3.500z" fill="#666" /></svg></div>
        </div>
      </div>
      <div className="flex h-[23px] shrink-0 items-center overflow-hidden border-b border-t border-b-[#999] border-t-[#c0c0c0] bg-[#f1f1f1] pl-[7px] [&>*]:shrink-0">
        <Fit w={53} className="-mt-[2px] text-[11.500px] leading-4 text-[#555]">Pripravený</Fit>
        <svg className="ml-[19px]" width="13" height="13" viewBox="0 0 13 13" fill="none" stroke="#777"><circle cx="3" cy="3" r="2.600" fill="#666" stroke="none" /><path d="M6.500 1.500h6v11h-11V7M7 3h5" strokeWidth="1.200" /><path d="M3 7.500h2M6 7.500h2M9 7.500h2M3 10h2M6 10h2M9 10h2M6 5h2M9 5h2" strokeWidth="1.300" /></svg>
        <div className="ml-[519px] flex h-full w-[38px] items-center justify-center bg-[#c8c8c8] pb-px">
          <svg width="13" height="13" viewBox="0 0 13 13" fill="none" stroke="#666"><path d="M.5.5h12v12H.5zM.5 4.500h12M.5 8.500h12M4.500.5v12M8.500.5v12" /></svg>
        </div>
        <svg className="mb-px ml-3" width="14" height="13" viewBox="0 0 14 13" fill="none" stroke="#666"><path d="M.5.5h13v12H.5zM3.500 2.500h7v8h-7zM5 4.500h4M5 6.500h4M5 8.500h4" /></svg>
        <svg className="mb-px ml-6" width="14" height="13" viewBox="0 0 14 13" fill="none" stroke="#666"><path d="M.5.5h13v12H.5zM4.500.5v7M9.500.5v7M.5 7.500h9" /></svg>
        <b className="ml-[17px] h-[2px] w-[6px] bg-[#555]" />
        <div className="ml-1 flex w-[100px] items-center">
          <b className="h-px w-[40px] bg-[#999]" /><b className="h-[11px] w-1 bg-[#555]" /><b className="h-px w-[6px] bg-[#999]" /><b className="h-[5px] w-px bg-[#999]" /><b className="h-px flex-1 bg-[#999]" />
        </div>
        <svg className="ml-1" width="8" height="8" viewBox="0 0 8 8"><path d="M0 4h8M4 0v8" stroke="#555" strokeWidth="2" /></svg>
        <div className="ml-4"><Fit w={23} className="-mt-[2px] text-[11.500px] leading-4 text-[#555]">85 %</Fit></div>
      </div>
    </>
  );
}

export default function App() {
  return (
    <div className="relative flex h-[1158px] w-[887px] flex-col overflow-hidden bg-white font-['Noto_Sans','Open_Sans',sans-serif]">
      <Ribbon active />
      <div className="h-px shrink-0 bg-[#8fa898]" />
      <div className="flex h-[413px] shrink-0">
        <FormSheet />
        <SidePanel />
      </div>
      <Ribbon active={false} />
      <ParameterTable />
      <BottomBars />
      <Dialog />
    </div>
  );
}
